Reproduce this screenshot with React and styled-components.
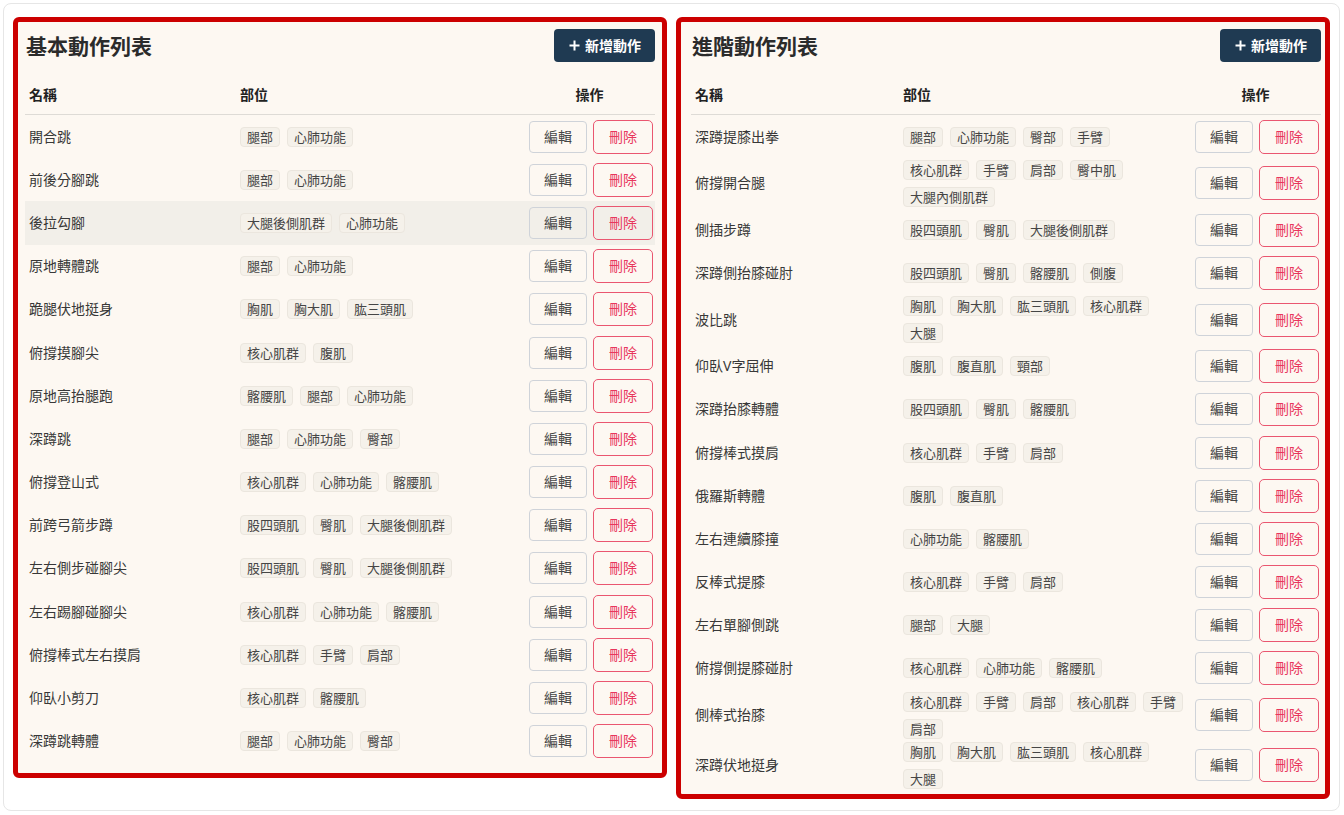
import React from "react";
import styled, { createGlobalStyle } from "styled-components";

const GlobalStyle = createGlobalStyle`
  html, body { margin: 0; padding: 0; background: #ffffff; }
  body {
    font-family: "Noto Sans", "Noto Sans CJK TC", sans-serif;
    color: #333;
    -webkit-font-smoothing: antialiased;
  }
  * { box-sizing: border-box; }
`;

const basicMoves = [
  { name: "開合跳", parts: ["腿部", "心肺功能"] },
  { name: "前後分腳跳", parts: ["腿部", "心肺功能"] },
  { name: "後拉勾腳", parts: ["大腿後側肌群", "心肺功能"], active: true },
  { name: "原地轉體跳", parts: ["腿部", "心肺功能"] },
  { name: "跪腿伏地挺身", parts: ["胸肌", "胸大肌", "肱三頭肌"] },
  { name: "俯撐摸腳尖", parts: ["核心肌群", "腹肌"] },
  { name: "原地高抬腿跑", parts: ["髂腰肌", "腿部", "心肺功能"] },
  { name: "深蹲跳", parts: ["腿部", "心肺功能", "臀部"] },
  { name: "俯撐登山式", parts: ["核心肌群", "心肺功能", "髂腰肌"] },
  { name: "前跨弓箭步蹲", parts: ["股四頭肌", "臀肌", "大腿後側肌群"] },
  { name: "左右側步碰腳尖", parts: ["股四頭肌", "臀肌", "大腿後側肌群"] },
  { name: "左右踢腳碰腳尖", parts: ["核心肌群", "心肺功能", "髂腰肌"] },
  { name: "俯撐棒式左右摸肩", parts: ["核心肌群", "手臂", "肩部"] },
  { name: "仰臥小剪刀", parts: ["核心肌群", "髂腰肌"] },
  { name: "深蹲跳轉體", parts: ["腿部", "心肺功能", "臀部"] },
];

const advancedMoves = [
  { name: "深蹲提膝出拳", parts: ["腿部", "心肺功能", "臀部", "手臂"] },
  { name: "俯撐開合腿", parts: ["核心肌群", "手臂", "肩部", "臀中肌", "大腿內側肌群"] },
  { name: "側插步蹲", parts: ["股四頭肌", "臀肌", "大腿後側肌群"] },
  { name: "深蹲側抬膝碰肘", parts: ["股四頭肌", "臀肌", "髂腰肌", "側腹"] },
  { name: "波比跳", parts: ["胸肌", "胸大肌", "肱三頭肌", "核心肌群", "大腿"] },
  { name: "仰臥V字屈伸", parts: ["腹肌", "腹直肌", "頸部"] },
  { name: "深蹲抬膝轉體", parts: ["股四頭肌", "臀肌", "髂腰肌"] },
  { name: "俯撐棒式摸肩", parts: ["核心肌群", "手臂", "肩部"] },
  { name: "俄羅斯轉體", parts: ["腹肌", "腹直肌"] },
  { name: "左右連續膝撞", parts: ["心肺功能", "髂腰肌"] },
  { name: "反棒式提膝", parts: ["核心肌群", "手臂", "肩部"] },
  { name: "左右單腳側跳", parts: ["腿部", "大腿"] },
  { name: "俯撐側提膝碰肘", parts: ["核心肌群", "心肺功能", "髂腰肌"] },
  { name: "側棒式抬膝", parts: ["核心肌群", "手臂", "肩部", "核心肌群", "手臂", "肩部"] },
  { name: "深蹲伏地挺身", parts: ["胸肌", "胸大肌", "肱三頭肌", "核心肌群", "大腿"] },
];

const Page = styled.div`
  padding: 3px 4px 3px 3px;
`;

const Card = styled.div`
  background: #ffffff;
  border: 1px solid #e6e6e6;
  border-radius: 8px;
  padding: 13px 9px 11px;
  display: flex;
  align-items: flex-start;
  gap: 9px;
`;

const Panel = styled.section`
  width: 654px;
  flex: none;
  background: #fdf8f2;
  border: 5px solid #cc0000;
  border-radius: 6px;
  padding: 7px ${(p) => p.$padRight}px ${(p) => p.$padBottom}px ${(p) => p.$padLeft}px;
`;

const PanelHeader = styled.div`
  display: flex;
  align-items: center;
  justify-content: space-between;
  height: 33px;
  margin-bottom: 13px;
`;

const Title = styled.h2`
  margin: 0 0 0 1px;
  font-size: 21px;
  line-height: 28px;
  font-weight: 700;
  color: #2b2b2b;
`;

const AddButton = styled.button`
  display: flex;
  align-items: center;
  gap: 5px;
  height: 33px;
  padding: 0 14px 0 15px;
  border: none;
  border-radius: 4px;
  background: #1f3a52;
  color: #ffffff;
  font-family: inherit;
  font-size: 14px;
  font-weight: 700;
  line-height: 20px;
  cursor: pointer;
`;

const Row = styled.div`
  display: grid;
  grid-template-columns: ${(p) => p.$nameW}px ${(p) => 499 - p.$nameW}px 131px;
  align-items: center;
  background: ${(p) => (p.$active ? "#f2efe9" : "transparent")};
`;

const HeadRow = styled(Row)`
  height: 40px;
  border-bottom: 1px solid #dedbd6;
`;

const HeadCell = styled.div`
  padding: 0 4px;
  font-size: 14px;
  line-height: 20px;
  font-weight: 700;
  color: #222;
  text-align: ${(p) => (p.$center ? "center" : "left")};
`;

const NameCell = styled.div`
  padding: 0 4px;
  font-size: 14px;
  line-height: 20px;
  color: #383838;
  white-space: nowrap;
`;

const TagCell = styled.div`
  display: flex;
  flex-wrap: wrap;
  gap: 7px;
  padding: 1.5px 0 1.5px 4px;
`;

const Tag = styled.span`
  display: inline-block;
  height: 20px;
  padding: 0 6px;
  border: 1px solid #ebe6de;
  border-radius: 4px;
  background: #f5f1ea;
  color: #454545;
  font-size: 13px;
  line-height: 18px;
  white-space: nowrap;
`;

const ActionCell = styled.div`
  display: flex;
  justify-content: flex-end;
  align-items: center;
  gap: 6px;
  padding: 4.6px 2px 4.6px 0;
`;

const ActionButton = styled.button`
  height: ${(p) => (p.$danger ? 34 : 32)}px;
  padding: 0 ${(p) => (p.$danger ? 15 : 14)}px;
  border: 1px solid ${(p) => (p.$danger ? "#ea5670" : "#cfd3d9")};
  border-radius: ${(p) => (p.$danger ? 5 : 4)}px;
  background: transparent;
  color: ${(p) => (p.$danger ? "#e8365d" : "#454545")};
  font-family: inherit;
  font-size: 14px;
  line-height: 20px;
  cursor: pointer;
`;

const PlusIcon = () => (
  <svg width="11" height="11" viewBox="0 0 11 11" aria-hidden="true">
    <path d="M5.5 0.5v10M0.5 5.5h10" stroke="#ffffff" strokeWidth="2" />
  </svg>
);

function MoveTable({ title, moves, padLeft, padRight, padBottom, nameW }) {
  return (
    <Panel $padLeft={padLeft} $padRight={padRight} $padBottom={padBottom}>
      <PanelHeader>
        <Title>{title}</Title>
        <AddButton>
          <PlusIcon />
          新增動作
        </AddButton>
      </PanelHeader>
      <HeadRow $nameW={nameW}>
        <HeadCell>名稱</HeadCell>
        <HeadCell>部位</HeadCell>
        <HeadCell $center>操作</HeadCell>
      </HeadRow>
      {moves.map((m, i) => (
        <Row key={i} $nameW={nameW} $active={m.active}>
          <NameCell>{m.name}</NameCell>
          <TagCell>
            {m.parts.map((p, j) => (
              <Tag key={j}>{p}</Tag>
            ))}
          </TagCell>
          <ActionCell>
            <ActionButton>編輯</ActionButton>
            <ActionButton $danger>刪除</ActionButton>
          </ActionCell>
        </Row>
      ))}
    </Panel>
  );
}

export default function App() {
  return (
    <>
      <GlobalStyle />
      <Page>
        <Card>
          <MoveTable
            title="基本動作列表"
            moves={basicMoves}
            padLeft={7}
            padRight={7}
            padBottom={10}
            nameW={211}
          />
          <MoveTable
            title="進階動作列表"
            moves={advancedMoves}
            padLeft={10}
            padRight={4}
            padBottom={4}
            nameW={208}
          />
        </Card>
      </Page>
    </>
  );
}
